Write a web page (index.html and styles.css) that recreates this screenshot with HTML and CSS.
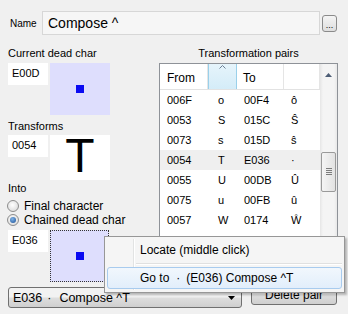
FILE: index.html
```html
<!DOCTYPE html>
<html lang="en">
<head>
<meta charset="UTF-8">
<title>Dead char editor</title>
<link rel="stylesheet" href="styles.css">
</head>
<body>
<div class="dialog">
    <div class="name-row">
        <span class="name-label">Name</span>
        <div class="name-field">Compose ^</div>
        <button type="button" class="dots-btn">...</button>
    </div>

    <div class="main">
        <div class="left-col">
            <div class="caption">Current dead char</div>
            <div class="char-row">
                <div class="code-box">E00D</div>
                <div class="preview lavender"><span class="dead-mark"></span></div>
            </div>

            <div class="caption transforms">Transforms</div>
            <div class="char-row">
                <div class="code-box">0054</div>
                <div class="preview glyph">T</div>
            </div>

            <div class="caption into">Into</div>
            <label class="radio"><span class="radio-circle"></span>Final character</label>
            <label class="radio"><span class="radio-circle checked"></span>Chained dead char</label>
            <div class="char-row chained">
                <div class="code-box">E036</div>
                <div class="preview lavender focused"><span class="dead-mark"></span></div>
            </div>
        </div>

        <div class="right-col">
            <div class="caption centered">Transformation pairs</div>
            <div class="pairs">
                <div class="pairs-body">
                    <div class="pairs-head">
                        <div class="hcell">From</div>
                        <div class="hcell sorted">
                            <svg width="7" height="4" viewBox="0 0 7 4"><path d="M0.5 3.5 L3.5 0.5 L6.5 3.5" fill="none" stroke="#6d7f95" stroke-width="1"/></svg>
                        </div>
                        <div class="hcell to">To</div>
                        <div class="hcell"></div>
                    </div>
                    <div class="pair"><span>006F</span><span>o</span><span>00F4</span><span>ô</span></div>
                    <div class="pair"><span>0053</span><span>S</span><span>015C</span><span>Ŝ</span></div>
                    <div class="pair"><span>0073</span><span>s</span><span>015D</span><span>ŝ</span></div>
                    <div class="pair current"><span>0054</span><span>T</span><span>E036</span><span>·</span></div>
                    <div class="pair"><span>0055</span><span>U</span><span>00DB</span><span>Û</span></div>
                    <div class="pair"><span>0075</span><span>u</span><span>00FB</span><span>û</span></div>
                    <div class="pair"><span>0057</span><span>W</span><span>0174</span><span>Ŵ</span></div>
                </div>
                <div class="scrollbar">
                    <div class="sb-btn">
                        <svg width="7" height="4" viewBox="0 0 7 4"><path d="M0 4 L3.5 0 L7 4 Z" fill="#4d5d75"/></svg>
                    </div>
                    <div class="sb-track"></div>
                    <div class="sb-thumb"><span></span><span></span><span></span><span></span></div>
                    <div class="sb-track"></div>
                    <div class="sb-btn">
                        <svg width="7" height="4" viewBox="0 0 7 4"><path d="M0 0 L3.5 4 L7 0 Z" fill="#4d5d75"/></svg>
                    </div>
                </div>
            </div>
        </div>
    </div>

    <div class="bottom-row">
        <div class="combo">
            <span>E036</span><span class="combo-dot">·</span><span>Compose ^T</span>
            <svg class="combo-arrow" width="7" height="4" viewBox="0 0 7 4"><path d="M0 0 L7 0 L3.5 4 Z" fill="#000"/></svg>
        </div>
        <button type="button" class="btn">Delete pair</button>
    </div>

    <div class="context-menu">
        <div class="menu-item">Locate (middle click)</div>
        <div class="menu-sep"></div>
        <div class="menu-item hot">Go to<span class="menu-dot">·</span>(E036) Compose ^T</div>
    </div>
</div>
</body>
</html>
```

FILE: styles.css
```css
body {
    margin: 0;
    padding: 0;
    background-color: #f0f0f0;
    font-family: "Liberation Sans", Arial, sans-serif;
    font-size: 11px;
    color: #000;
}
.dialog {
    position: relative;
    width: 348px;
    height: 314px;
    overflow: hidden;
}

/* nombre */
.name-row {
    display: flex;
    align-items: center;
    padding: 11px 0 0 10px;
    height: 24px;
}
.name-label {
    width: 32px;
    font-size: 10px;
}
.name-field {
    box-sizing: border-box;
    width: 278px;
    height: 24px;
    border: 1px solid #d7d7d7;
    background-color: #f6f6f6;
    font-size: 14px;
    line-height: 22px;
    padding-left: 5px;
}
.dots-btn {
    box-sizing: border-box;
    margin-left: 2px;
    width: 15px;
    height: 17px;
    padding: 0;
    border: 1px solid #8a8a8a;
    border-radius: 3px;
    background: linear-gradient(#f4f4f4, #dedede);
    font-family: "Liberation Sans", Arial, sans-serif;
    font-size: 9px;
    line-height: 18px;
}

.main {
    display: flex;
    margin-top: 12px;
    padding-left: 8px;
}
.caption {
    line-height: 13px;
    height: 13px;
    margin-bottom: 3px;
    white-space: nowrap;
}
.caption.centered {
    text-align: center;
}
.caption.transforms {
    margin-top: 5px;
    margin-bottom: 2px;
}
.caption.into {
    margin-top: 2px;
    margin-bottom: 4px;
}

.left-col {
    width: 102px;
}
.char-row {
    display: flex;
    align-items: flex-start;
    gap: 2px;
}
.char-row.chained {
    margin-top: 3px;
}
.code-box {
    box-sizing: border-box;
    width: 40px;
    height: 22px;
    background-color: #fff;
    padding: 4px 0 0 4px;
    line-height: 13px;
}
.preview {
    width: 60px;
    display: flex;
    align-items: center;
    justify-content: center;
}
.preview.lavender {
    height: 52px;
    background-color: #dedefd;
}
.preview.focused {
    box-sizing: border-box;
    width: 59px;
    height: 52px;
    border: 1px dotted #333;
}
.preview.glyph {
    height: 45px;
    background-color: #fff;
    font-size: 48px;
    line-height: 48px;
    align-items: flex-end;
}
.dead-mark {
    width: 8px;
    height: 8px;
    background-color: #0a0af2;
}

.radio {
    display: flex;
    align-items: center;
    height: 14px;
    font-size: 12px;
    margin-left: -1px;
    white-space: nowrap;
}
.radio-circle {
    box-sizing: border-box;
    flex: none;
    width: 12px;
    height: 12px;
    margin-right: 5px;
    border-radius: 50%;
    border: 1px solid #8d8d8d;
    background: radial-gradient(circle at 45% 40%, #ffffff, #d4d4d4);
    position: relative;
}
.radio-circle.checked::after {
    content: "";
    position: absolute;
    left: 2px;
    top: 2px;
    width: 6px;
    height: 6px;
    border-radius: 50%;
    background: radial-gradient(circle at 40% 35%, #7fb3e8, #1a4f95);
}

/* tabla de pares */
.right-col {
    margin-left: 49px;
    width: 179px;
}
.pairs {
    box-sizing: border-box;
    display: flex;
    height: 217px;
    border: 1px solid #8e9298;
    background-color: #fff;
}
.pairs-body {
    width: 160px;
    overflow: hidden;
}
.pairs-head {
    display: grid;
    grid-template-columns: 48px 29px 47px 36px;
    height: 25px;
    border-bottom: 1px solid #e2e2e2;
    font-size: 12px;
}
.hcell {
    box-sizing: border-box;
    padding: 7px 0 0 7px;
    border-right: 1px solid #e5e5e5;
}
.hcell.to {
    padding-left: 6px;
}
.hcell.sorted {
    display: flex;
    justify-content: center;
    padding: 1px 0 0 0;
    background: linear-gradient(#e6f4fb, #d4ecf8);
    border-left: 1px solid #9ad0ea;
    border-right: 1px solid #9ad0ea;
}
.pair {
    display: grid;
    grid-template-columns: 48px 29px 47px 36px;
    height: 20px;
    line-height: 20px;
}
.pair span {
    padding-left: 7px;
}
.pair span:nth-child(2) {
    padding-left: 10px;
}
.pair.current {
    background-color: #efefef;
}

.scrollbar {
    width: 17px;
    display: flex;
    flex-direction: column;
    background: linear-gradient(90deg, #e6e6e6, #f4f4f4 3px, #f4f4f4 14px, #e8e8e8);
}
.sb-btn {
    height: 22px;
    display: flex;
    align-items: center;
    justify-content: center;
}
.sb-track {
    flex: 1;
}
.sb-track:first-of-type {
    flex: none;
    height: 124px;
}
.sb-thumb {
    box-sizing: border-box;
    height: 40px;
    margin: 0 1px;
    border: 1px solid #9a9a9a;
    border-radius: 2px;
    background: linear-gradient(90deg, #f5f5f5, #e2e2e2);
    display: flex;
    flex-direction: column;
    align-items: center;
    justify-content: center;
    gap: 1px;
}
.sb-thumb span {
    width: 6px;
    height: 1px;
    background-color: #7c7c7c;
}

/* fila inferior */
.bottom-row {
    display: flex;
    align-items: flex-start;
    gap: 9px;
    margin-top: 2px;
    padding-left: 8px;
}
.combo {
    box-sizing: border-box;
    position: relative;
    display: flex;
    align-items: center;
    width: 234px;
    height: 21px;
    margin-top: 3px;
    padding-left: 4px;
    border: 1px solid #707070;
    border-radius: 3px;
    background: linear-gradient(#f2f2f2 45%, #dddddd 55%, #cfcfcf);
    font-size: 12.5px;
}
.combo-dot {
    margin: 0 8px 0 5px;
}
.combo-arrow {
    position: absolute;
    right: 6px;
    top: 8px;
}
.btn {
    box-sizing: border-box;
    width: 86px;
    height: 21px;
    padding: 0;
    border: 1px solid #707070;
    border-radius: 3px;
    background: linear-gradient(#f2f2f2 45%, #dddddd 55%, #cfcfcf);
    font-family: "Liberation Sans", Arial, sans-serif;
    font-size: 12px;
}

/* menú contextual */
.context-menu {
    position: absolute;
    left: 104px;
    top: 236px;
    box-sizing: border-box;
    width: 241px;
    height: 57px;
    padding: 2px;
    border: 1px solid #979797;
    background-color: #f5f5f5;
    box-shadow: 2px 2px 2px rgba(0, 0, 0, 0.25);
    font-size: 12px;
}
.context-menu::before {
    content: "";
    position: absolute;
    left: 28px;
    top: 2px;
    bottom: 2px;
    width: 1px;
    background-color: #e2e3e3;
    border-right: 1px solid #fff;
}
.menu-item {
    position: relative;
    box-sizing: border-box;
    height: 22px;
    line-height: 22px;
    padding-left: 33px;
}
.menu-item.hot {
    margin-top: 1px;
    border: 1px solid #a8cbee;
    border-radius: 3px;
    background: linear-gradient(#f1f7fd, #e2eefb);
    padding-left: 32px;
    line-height: 20px;
}
.menu-sep {
    height: 1px;
    margin: 2px 0 2px 29px;
    background-color: #e0e0e0;
    border-bottom: 1px solid #fff;
}
.menu-dot {
    margin: 0 6px 0 7px;
}
```
